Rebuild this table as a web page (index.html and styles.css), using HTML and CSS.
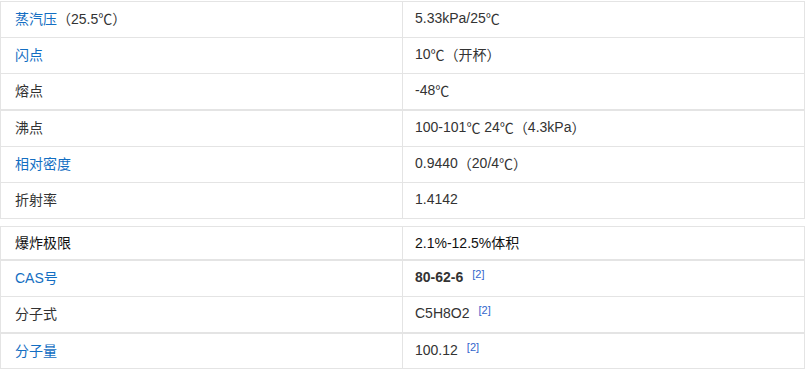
FILE: index.html
```html
<!DOCTYPE html>
<html lang="zh-CN">
<head>
  <meta charset="UTF-8">
  <meta name="viewport" content="width=device-width, initial-scale=1.0">
  <title>甲基丙烯酸甲酯 - 基本信息</title>
  <link rel="stylesheet" href="styles.css">
</head>
<body>
  <div class="basic-info">
    <!-- 物理性质 -->
    <div class="group">
      <div class="row">
        <div class="name"><a href="#">蒸汽压</a>（25.5<span class="cjk">℃</span>）</div>
        <div class="value">5.33kPa/25<span class="cjk">℃</span></div>
      </div>
      <div class="row">
        <div class="name"><a href="#">闪点</a></div>
        <div class="value">10<span class="cjk">℃（开杯）</span></div>
      </div>
      <div class="row">
        <div class="name">熔点</div>
        <div class="value">-48<span class="cjk">℃</span></div>
      </div>
    </div>

    <div class="group">
      <div class="row">
        <div class="name">沸点</div>
        <div class="value">100-101<span class="cjk">℃</span>&nbsp;24<span class="cjk">℃（</span>4.3kPa<span class="cjk">）</span></div>
      </div>
      <div class="row">
        <div class="name"><a href="#">相对密度</a></div>
        <div class="value">0.9440<span class="cjk">（</span>20/4<span class="cjk">℃）</span></div>
      </div>
      <div class="row">
        <div class="name">折射率</div>
        <div class="value">1.4142</div>
      </div>
    </div>

    <div class="group group-split">
      <div class="row row-short">
        <div class="name dark">爆炸极限</div>
        <div class="value dark">2.1%-12.5%体积</div>
      </div>
    </div>

    <!-- 化学信息 -->
    <div class="group">
      <div class="row">
        <div class="name"><a href="#">CAS号</a></div>
        <div class="value"><b>80-62-6</b><sup class="ref"><a href="#">[2]</a></sup></div>
      </div>
      <div class="row">
        <div class="name">分子式</div>
        <div class="value">C5H8O2<sup class="ref"><a href="#">[2]</a></sup></div>
      </div>
    </div>

    <div class="group">
      <div class="row row-last">
        <div class="name"><a href="#">分子量</a></div>
        <div class="value">100.12<sup class="ref"><a href="#">[2]</a></sup></div>
      </div>
    </div>
  </div>
</body>
</html>
```

FILE: styles.css
```css
body {
  margin: 0;
  padding: 1px 0 0 0;
  background-color: #fff;
  font-family: "Liberation Sans", Arial, "Noto Sans CJK SC", sans-serif;
  font-size: 14px;
  color: #333;
}

.basic-info {
  width: 805px;
}

.group {
  border: 1px solid #e4e4e4;
}

.group + .group {
  border-top: 2px solid #e4e4e4;
  margin-top: -1px;
}

.group + .group-split {
  margin-top: 7px;
  border-top: 1px solid #e4e4e4;
}

.row {
  display: grid;
  grid-template-columns: 402px 1fr;
  height: 35px;
}

.row + .row {
  border-top: 1px solid #e4e4e4;
}

.row-short {
  height: 32px;
}

.row-last {
  height: 34px;
}

.name,
.value {
  display: flex;
  align-items: center;
  white-space: pre;
  padding-bottom: 3px;
  box-sizing: border-box;
}

.name {
  padding-left: 14px;
  border-right: 1px solid #e4e4e4;
}

.value {
  padding-left: 12px;
}

.cjk {
  font-family: "Noto Sans CJK SC", sans-serif;
}

.dark {
  color: #111;
}

a {
  color: #136ec2;
  text-decoration: none;
}

.ref {
  font-size: 11px;
  margin-left: 9px;
  align-self: flex-start;
  margin-top: 8px;
  line-height: 1;
}

.ref a {
  color: #3366cc;
}
```
